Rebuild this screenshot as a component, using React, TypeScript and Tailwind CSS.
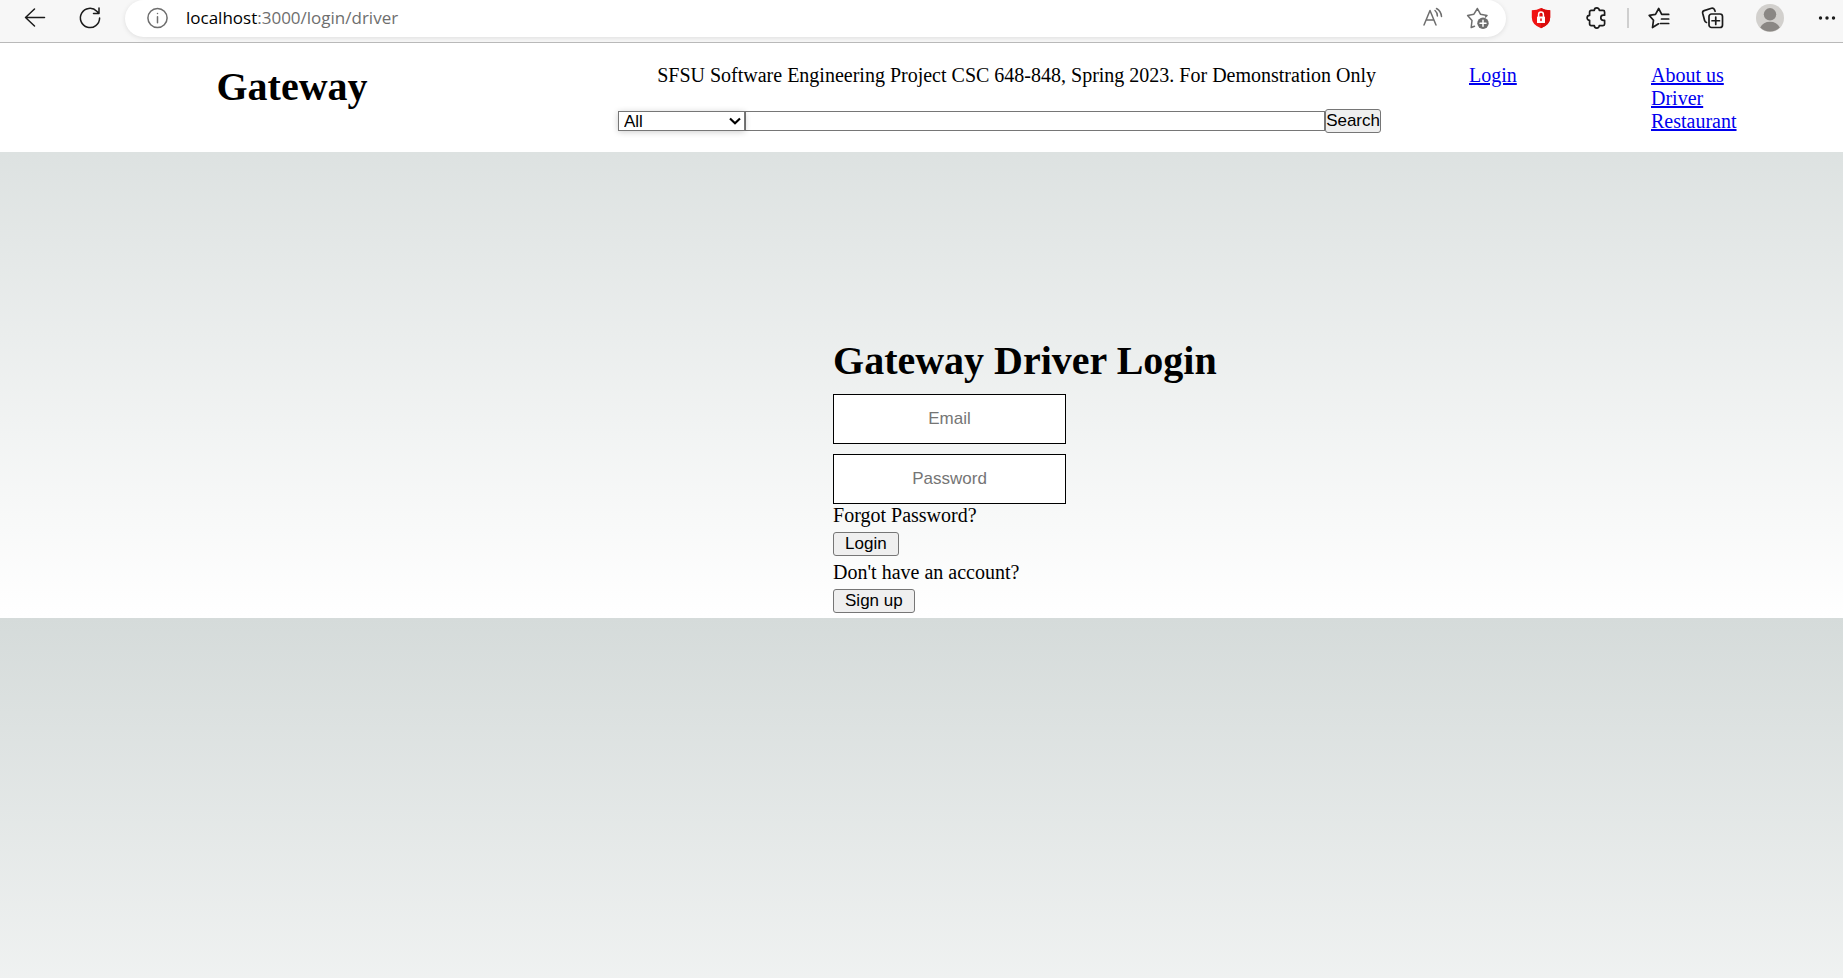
import type { ReactNode } from "react";

function Icon({ children }: { children: ReactNode }) {
  return (
    <svg
      viewBox="0 0 24 24"
      className="size-6 shrink-0"
      fill="none"
      stroke="currentColor"
      strokeWidth="1.5"
      strokeLinecap="round"
      strokeLinejoin="round"
      aria-hidden="true"
    >
      {children}
    </svg>
  );
}

function ToolButton({ label, children }: { label: string; children: ReactNode }) {
  return (
    <button type="button" aria-label={label} className="shrink-0">
      {children}
    </button>
  );
}

function Toolbar() {
  return (
    <div className="flex h-[43px] items-start border-b border-[#b9b9b9] bg-[#f7f7f7] text-[#1b1b1b]">
      <div className="flex h-9 items-center gap-[31px] pr-[23px] pl-[23px]">
        <ToolButton label="Back">
          <Icon><path d="M21.500 11.500H2.500M11.500 3L2.500 11.500l9 8.500" /></Icon>
        </ToolButton>
        <ToolButton label="Refresh">
          <Icon><path d="M21.600 12A9.600 9.600 0 1 1 18.800 5.200L21 7.400M21 2v5.500h-5.500" /></Icon>
        </ToolButton>
      </div>
      <div className="flex h-[37px] flex-1 items-center rounded-[20px] bg-white pr-4 pb-px pl-5 text-[#6e6e6e] shadow-[0_1px_5px_rgba(0,0,0,0.1)]">
        <ToolButton label="Site information">
          <Icon>
            <circle cx="12.500" cy="12" r="9.600" />
            <path d="M12.500 10.800v6M12.500 7.400v.2" />
          </Icon>
        </ToolButton>
        <div className="flex-1 pl-[17px] font-['Open_Sans',sans-serif] text-[17px] leading-6">
          <span className="text-black">localhost</span>:3000/login/driver
        </div>
        <div className="flex items-center gap-[21px]">
          <ToolButton label="Read aloud">
            <Icon>
              <path d="M3 19L9 4.500 15 19M5.100 14h7.800M14 4.500q2.400 2 2.400 5.500M15.500 2.500q4.500 2.500 5 8" />
            </Icon>
          </ToolButton>
          <ToolButton label="Add to favorites">
            <Icon>
              <path d="M8.500 20.200l-3.300 1.300.8-7L1.600 9.500l6.300-1.300L11.400 2.500l3 5.700 6.600 1.300-1.500 1.500" />
              <circle cx="17" cy="17.200" r="5.700" fill="currentColor" stroke="none" />
              <path d="M17 14.200v6M14 17.200h6" stroke="white" />
            </Icon>
          </ToolButton>
        </div>
      </div>
      <div className="flex h-9 items-center pr-1 pl-[23px]">
        <ToolButton label="Password protection">
          <Icon>
            <path d="M12 2q4 2.300 9.200 2.300v7.200q0 7.200-9.200 10.700Q2.800 18.700 2.800 11.500V4.300Q8 4.300 12 2z" fill="#f01414" stroke="none" />
            <path d="M12 2q4 2.300 9.200 2.300v7.200q0 7.200-9.200 10.700z" fill="#da0c0c" stroke="none" />
            <rect x="8" y="10.500" width="8" height="6.500" rx="0.500" fill="white" stroke="none" />
            <path d="M9.600 10.500V8.500a2.400 2.400 0 0 1 4.800 0v2" stroke="white" />
            <path d="M12 13v1.500" stroke="#e01010" />
          </Icon>
        </ToolButton>
        <div className="flex items-center gap-[18px] pl-8">
          <ToolButton label="Extensions">
            <Icon>
              <path
                d="M6.200 4.300H9.300a2.500 2.500 0 0 1 5 0H18a1.600 1.600 0 0 1 1.600 1.600v3.300h-1.200a2.600 2.600 0 0 0 0 5.200h1.200V18a1.600 1.600 0 0 1-1.600 1.600h-3.700a2.500 2.500 0 0 1-5 0H6.200A1.600 1.600 0 0 1 4.600 18v-3.700a2.500 2.500 0 0 1 0-5V5.900a1.600 1.600 0 0 1 1.600-1.600z"
                strokeWidth="1.700"
              />
            </Icon>
          </ToolButton>
          <span className="h-5 w-0.5 bg-[#cfcfcf]" />
          <ToolButton label="Favorites">
            <Icon>
              <path d="M11.500 17.800l-6 3.700 1-7.300L2.200 9.400l6.300-1L11.700 2.500l3 5.900h7M14.500 13h7.200M13.500 17.500h8.200" strokeWidth="1.700" />
            </Icon>
          </ToolButton>
        </div>
        <div className="flex items-center gap-[31px] pl-[30px]">
          <ToolButton label="Collections">
            <Icon>
              <path d="M5.500 16.500q-1.500-.5-1.900-2L1.700 7.300Q1.200 5.200 3.200 4.600L10.500 2.300q2-.5 3 1.400l.6 1.600" strokeWidth="1.700" />
              <rect x="8" y="8" width="13.500" height="13.500" rx="2.500" strokeWidth="1.700" />
              <path d="M14.750 11v7.500M11 14.750h7.500" strokeWidth="1.700" />
            </Icon>
          </ToolButton>
          <ToolButton label="Profile">
            <svg viewBox="0 0 28 28" className="size-7" aria-hidden="true">
              <circle cx="14" cy="14" r="14" fill="#d2d0cd" />
              <circle cx="14" cy="10.300" r="6.200" fill="#8a8784" />
              <path d="M4.200 23.500q3-5.700 9.800-5.700t9.800 5.700a14 14 0 0 1-19.600 0z" fill="#8a8784" />
            </svg>
          </ToolButton>
          <ToolButton label="Settings and more">
            <Icon>
              <g fill="currentColor" stroke="none">
                <circle cx="5.500" cy="12" r="1.700" />
                <circle cx="12" cy="12" r="1.700" />
                <circle cx="18.500" cy="12" r="1.700" />
              </g>
            </Icon>
          </ToolButton>
        </div>
      </div>
    </div>
  );
}

const buttonStyle =
  "h-6 rounded-[3px] border border-[#767676] bg-[#efefef] font-['Liberation_Sans',Arial,sans-serif] text-[17px] leading-5 text-black";

const fieldStyle =
  "h-[50px] w-[233px] border border-black bg-white text-center font-['Liberation_Sans',Arial,sans-serif] text-[17px] text-black placeholder:text-[#757575]";

const linkStyle = "text-[#0000ee] underline";

function Header() {
  return (
    <header className="grid grid-cols-[618fr_851fr_182fr_192fr] bg-white pt-[21px] pb-[19px]">
      <h1 className="pr-[34px] text-center text-[40px] leading-[46px] font-bold">Gateway</h1>
      <div className="pr-[88px]">
        <p className="pr-[5px] text-right">
          SFSU Software Engineering Project CSC 648-848, Spring 2023. For Demonstration Only
        </p>
        <form className="mt-[22px] flex h-6 items-center" onSubmit={(e) => e.preventDefault()}>
          <div className="relative w-[127px]">
            <select
              aria-label="Category"
              className="block h-5 w-full appearance-none border border-[#767676] bg-white pl-[5px] font-['Liberation_Sans',Arial,sans-serif] text-[17px] leading-5 text-black shadow-[0_1px_6px_rgba(0,0,0,0.2)]"
            >
              <option>All</option>
            </select>
            <svg
              viewBox="0 0 12 8"
              className="pointer-events-none absolute top-[6px] right-1 h-2 w-3"
              fill="none"
              stroke="black"
              strokeWidth="2.200"
              aria-hidden="true"
            >
              <path d="M1 1.500l5 4.700 5-4.700" />
            </svg>
          </div>
          <input
            type="text"
            aria-label="Search text"
            className="h-5 min-w-0 flex-1 border border-[#767676] bg-white px-1 font-['Liberation_Sans',Arial,sans-serif] text-[17px]"
          />
          <button type="submit" className={buttonStyle}>Search</button>
        </form>
      </div>
      <nav>
        <a href="#login" className={linkStyle}>Login</a>
      </nav>
      <nav className="flex flex-col items-start">
        <a href="#about" className={linkStyle}>About us</a>
        <a href="#driver" className={linkStyle}>Driver</a>
        <a href="#restaurant" className={linkStyle}>Restaurant</a>
      </nav>
    </header>
  );
}

function DriverLogin() {
  return (
    <main className="pt-[186px] pl-[45.2%]">
      <h1 className="text-[40px] leading-[46px] font-bold">Gateway Driver Login</h1>
      <form className="flex flex-col items-start" onSubmit={(e) => e.preventDefault()}>
        <input type="email" aria-label="Email" placeholder="Email" className={`${fieldStyle} mt-[10px]`} />
        <input type="password" aria-label="Password" placeholder="Password" className={`${fieldStyle} mt-[10px]`} />
        <p>Forgot Password?</p>
        <button type="submit" className={`${buttonStyle} my-[5px] px-[11px]`}>Login</button>
        <p>Don't have an account?</p>
        <button type="button" className={`${buttonStyle} my-[5px] px-[11px]`}>Sign up</button>
      </form>
    </main>
  );
}

export default function App() {
  return (
    <div className="flex min-h-screen flex-col">
      <Toolbar />
      <div className="flex-1 bg-[linear-gradient(#d5dbda,#ffffff)] bg-[length:100%_575px] font-['Liberation_Serif','Times_New_Roman',serif] text-[20px] leading-[23px] text-black">
        <Header />
        <DriverLogin />
      </div>
    </div>
  );
}
